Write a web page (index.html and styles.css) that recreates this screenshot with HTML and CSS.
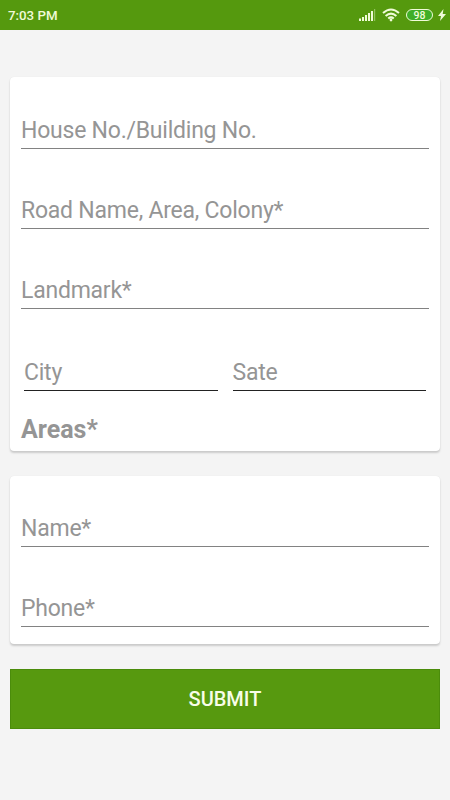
FILE: index.html
```html
<!DOCTYPE html>
<html lang="en">
<head>
<meta charset="utf-8">
<title>Address</title>
<link rel="stylesheet" href="styles.css">
</head>
<body>
<header class="status">
  <span class="time">7:03 PM</span>
  <div class="indicators">
    <svg class="signal" width="18" height="14" viewBox="0 0 18 14"><path d="M1 10.500h2V13H1zM4 9h2v4H4zM7 7h2v6H7zM10 5h2v8h-2zM13 3h2v10h-2z" fill="#f0fbd8"/><path d="M16 1h1.200v12H16z" fill="#f0fbd8" opacity=".4"/></svg>
    <svg class="wifi" width="18" height="14" viewBox="0 0 18 14"><g fill="none" stroke="#f0fbd8" stroke-width="2"><path d="M1 5Q9-2 17 5M3.600 8Q9 3.200 14.400 8M6.200 10.600Q9 8.200 11.800 10.600"/></g><circle cx="9" cy="12" r="1.400" fill="#f0fbd8"/></svg>
    <span class="battery">98</span>
    <svg class="bolt" width="8" height="12" viewBox="0 0 8 12"><path d="M5.500 0L0 7h3L2 12l6-7H4.700z" fill="#f0fbd8"/></svg>
  </div>
</header>
<main class="page">
  <section class="card address">
    <div class="field"><span class="label">House No./Building No.</span></div>
    <div class="field"><span class="label">Road Name, Area, Colony*</span></div>
    <div class="field"><span class="label">Landmark*</span></div>
    <div class="pair">
      <div class="field half"><span class="label">City</span></div>
      <div class="field half"><span class="label">Sate</span></div>
    </div>
    <h2 class="areas"><span class="label">Areas*</span></h2>
  </section>
  <section class="card contact">
    <div class="field"><span class="label">Name*</span></div>
    <div class="field"><span class="label">Phone*</span></div>
  </section>
  <button class="submit">SUBMIT</button>
</main>
</body>
</html>
```
FILE: styles.css
```css
* { box-sizing: border-box; }
body { margin: 0; height: 800px; background: #f4f4f4; font-family: Roboto, sans-serif; }
.status { height: 30px; padding: 0 4px 0 8px; background: #55990e; color: #f0fbd8; display: flex; align-items: center; justify-content: space-between; }
.time { font-size: 13.3px; font-weight: 500; }
.indicators { display: flex; align-items: center; }
.signal { margin-right: 6px; }
.wifi { margin-right: 6px; }
.battery { width: 27px; height: 12px; border: 1px solid #f0fbd8; border-radius: 6px; background: #3fae27; font-size: 10.5px; font-weight: 500; line-height: 11px; text-align: center; margin-right: 5px; }
.page { padding: 47px 10px 0; }
.card { background: #fff; border-radius: 4px; padding: 0 11px; box-shadow: 0 2px 2px rgba(0,0,0,.17), 0 0 1px rgba(0,0,0,.1); }
.address { height: 374px; }
.contact { height: 168px; margin-top: 25px; }
.field { height: 80px; border-bottom: 1px solid #828282; padding-top: 49px; font-size: 23px; letter-spacing: -0.23px; line-height: 26px; color: #959595; }
.address > .field:first-child { height: 72px; padding-top: 41px; }
.contact > .field:first-child { height: 71px; padding-top: 40px; }
.pair { display: flex; gap: 15px; padding: 0 3px; }
.pair > .half { flex: 1; height: 82px; padding-top: 51px; border-color: #222; }
.areas { margin: 24px 0 0; font-size: 25px; line-height: 29px; font-weight: 700; color: #959595; }
.submit { display: block; width: 100%; height: 60px; margin-top: 25px; border: 1px solid #4b8c0b; padding: 0; background: #57990f; color: #f8fde8; font: 500 20px Roboto, sans-serif; }
```
